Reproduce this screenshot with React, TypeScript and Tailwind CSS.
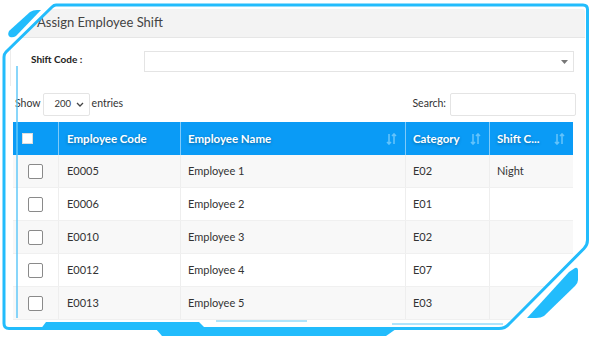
import React from "react";

const rows = [
  { code: "E0005", name: "Employee 1", cat: "E02", shift: "Night" },
  { code: "E0006", name: "Employee 2", cat: "E01", shift: "" },
  { code: "E0010", name: "Employee 3", cat: "E02", shift: "" },
  { code: "E0012", name: "Employee 4", cat: "E07", shift: "" },
  { code: "E0013", name: "Employee 5", cat: "E03", shift: "" },
];

function SortIcon() {
  return (
    <svg width="11" height="12" viewBox="0 0 11 12" className="shrink-0">
      <path d="M3 1 V11 M1 9 L3 11 L5 9" stroke="#63c3fb" strokeWidth="1.6" fill="none" />
      <path d="M8 11 V1 M6 3 L8 1 L10 3" stroke="#63c3fb" strokeWidth="1.6" fill="none" />
    </svg>
  );
}

const FRAME =
  "M56 5 H583 Q587.5 5 587.5 9.5 V240 Q587.5 245 584 248.5 L509 324 Q505 328.5 499 328.5 H9 Q4 328.5 4 323.5 V57 Q4 54 6 52 L52 7 Q54 5 56 5 Z";

export default function App() {
  return (
    <div className="relative w-[600px] h-[340px] bg-white overflow-hidden font-['Lato',sans-serif] text-[#333]">
      {/* card */}
      <div className="pl-[10px] pr-[15px] pt-[9px]">
        <div className="h-[29px] bg-[#f3f3f3] border-b border-[#e6e6e6] pl-[27px] flex items-center text-[13px] text-[#444] rounded-tr-[3px]">
          Assign Employee Shift
        </div>
        <div className="h-[48px] border-l border-[#ececec] flex items-start pt-[13px]">
          <div className="w-[133px] pl-[20px] pt-[1px] text-[10px] font-bold text-[#222]">Shift Code :</div>
          <div className="w-[430px] h-[21px] border border-[#e4e4e4] flex items-center justify-end pr-[5px]">
            <svg width="7" height="4" viewBox="0 0 7 4">
              <path d="M0 0 H7 L3.5 4 Z" fill="#777" />
            </svg>
          </div>
        </div>
      </div>

      {/* datatable */}
      <div className="pl-[13px] pr-[27px]">
        <div className="h-[36px] flex items-center text-[10.5px] text-[#333]">
          <span className="ml-[2px]">Show</span>
          <div className="ml-[2px] w-[47px] h-[23px] border border-[#e4e4e4] rounded-[2px] flex items-center pl-[11px] pr-[5px] text-[9.5px]">
            <span className="flex-1">200</span>
            <svg width="8" height="5" viewBox="0 0 8 5">
              <path d="M1 1 L4 4 L7 1" stroke="#444" strokeWidth="1.3" fill="none" />
            </svg>
          </div>
          <span className="ml-[2px]">entries</span>
          <span className="ml-auto">Search:</span>
          <div className="ml-[4px] mr-[-3px] w-[126px] h-[23px] border border-[#e4e4e4] rounded-[2px]" />
        </div>

        <div>
          <div className="flex h-[33px] bg-[#0a9bf6] text-white font-bold text-[11.5px] [text-shadow:0_1px_3px_rgba(0,0,0,0.35)]">
            <div className="w-[46px] flex items-center pl-[9px] border-r border-[#7fcaf9]">
              <div className="w-[11px] h-[11px] bg-white border border-[#ddd]" />
            </div>
            <div className="w-[122px] flex items-center pl-[8px] border-r border-[#7fcaf9]">Employee Code</div>
            <div className="w-[225px] flex items-center pl-[7px] pr-[8px] border-r border-[#7fcaf9]">
              <span className="flex-1">Employee Name</span>
              <SortIcon />
            </div>
            <div className="w-[84px] flex items-center pl-[7px] pr-[8px] border-r border-[#7fcaf9]">
              <span className="flex-1">Category</span>
              <SortIcon />
            </div>
            <div className="flex-1 flex items-center pl-[7px] pr-[8px]">
              <span className="flex-1">Shift C...</span>
              <SortIcon />
            </div>
          </div>
          {rows.map((r, i) => (
            <div
              key={r.code}
              className={`flex h-[33px] text-[11px] text-[#333] border-b border-[#f0f0f0] ${i % 2 === 0 ? "bg-[#f8f8f8]" : "bg-white"}`}
            >
              <div className="w-[46px] flex items-center justify-center border-r border-[#eeeeee]">
                <div className="w-[15px] h-[15px] rounded-[2px] border-[1.5px] border-[#8a8a8a] bg-white" />
              </div>
              <div className="w-[122px] flex items-center pl-[8px] border-r border-[#eeeeee]">{r.code}</div>
              <div className="w-[225px] flex items-center pl-[7px] border-r border-[#eeeeee]">{r.name}</div>
              <div className="w-[84px] flex items-center pl-[7px] border-r border-[#eeeeee]">{r.cat}</div>
              <div className="flex-1 flex items-center pl-[7px]">{r.shift}</div>
            </div>
          ))}
        </div>
      </div>

      {/* decorative frame */}
      <svg className="absolute inset-0 pointer-events-none" width="600" height="340" viewBox="0 0 600 340">
        <path d={`M0 0 H600 V340 H0 Z ${FRAME}`} fill="white" fillRule="evenodd" />
        <path d={FRAME} fill="none" stroke="#22bcfc" strokeWidth="3" strokeLinejoin="round" />
        <path d="M17 66 V318" stroke="#62c9f8" strokeWidth="1.5" />
        <path d="M216 321 H307" stroke="#62c9f8" strokeWidth="1.2" />
        <path d="M392 324 H503" stroke="#62c9f8" strokeWidth="1.2" />
        <path d="M9 31 L30 12 Q33 10 37 10 L41 10 L16 36 Q13 38 10 37 Q7 35 9 31 Z" fill="#22bcfc" />
        <path d="M40 330 L46 322 L199 322 L205 328 L205 330 Z" fill="#22bcfc" />
        <path d="M156 329 L162 336 L386 336 L396 329 Z" fill="#22bcfc" />
        <path d="M569 272 L575 268 Q578 267 578 271 L578 280 Q578 283 575 286 L544 316 Q541 318 536 318 L527 318 Z" fill="#22bcfc" />
      </svg>
    </div>
  );
}
